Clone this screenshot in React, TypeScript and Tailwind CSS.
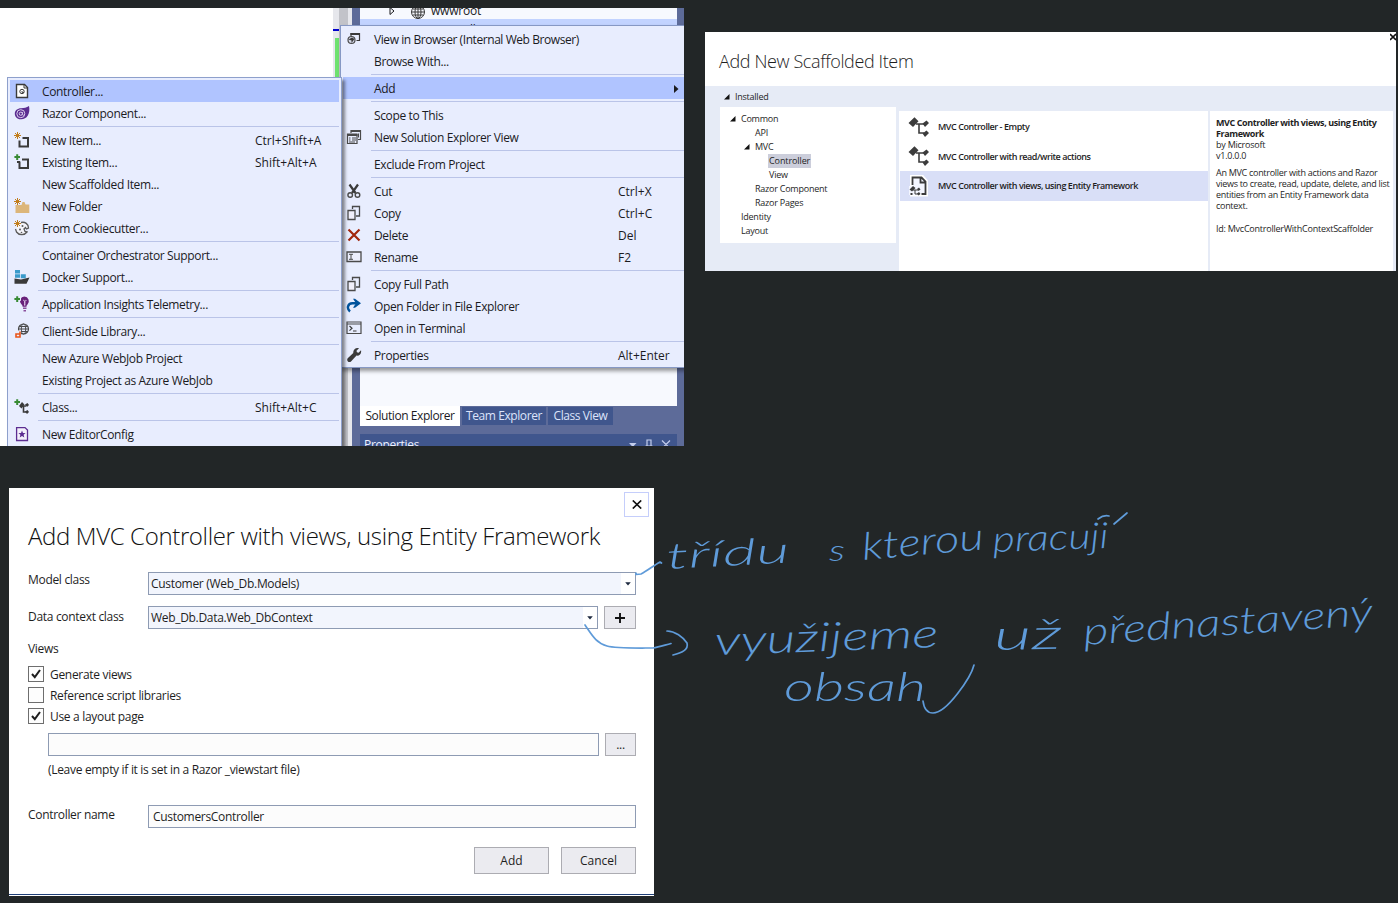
import type { ReactNode } from "react";

type Entry =
  | { kind: "sep" }
  | { kind: "item"; label: string; keys?: string; icon?: ReactNode; active?: boolean; arrow?: boolean };

const sep: Entry = { kind: "sep" };
const item = (label: string, icon?: ReactNode, keys?: string): Entry => ({ kind: "item", label, icon, keys });

function Icon({ children }: { children: ReactNode }) {
  return (
    <svg width="16" height="16" viewBox="0 0 16 16" fill="none" className="block">
      {children}
    </svg>
  );
}

const spark = (
  <path d="M3.5 0v7M0 3.5h7M1 1l5 5M6 1L1 6" stroke="#c27d1a" strokeWidth="1" />
);
const plus = <path d="M3.2 0.3v5.6M0.4 3.1h5.6" stroke="#388a34" strokeWidth="2" />;

const PageIcon = (
  <Icon>
    <path d="M2.5 1.5h8l3 3v10h-11z" fill="#fff" stroke="#3a3a3a" strokeWidth="1.4" />
    <path d="M10 1.5v3.5h3.5" stroke="#3a3a3a" />
    <circle cx="8" cy="8.5" r="2.2" stroke="#3a3a3a" strokeWidth="1" />
    <path d="M8 8v1.4h2" stroke="#3a3a3a" strokeWidth=".9" />
  </Icon>
);
const RazorIcon = (
  <Icon>
    <path d="M15 1c.8 4 .3 7-1.2 9.6C12.200 13.500 9.500 14.500 6.500 14.300 3 14 .8 11.600.8 8.700.8 5.500 3.500 3.200 7 3.200c3 0 5.500-.4 8-2.200z" fill="#5c2d91" />
    <circle cx="6.8" cy="8.7" r="4" stroke="#d9ccec" strokeWidth="1" />
    <circle cx="6.8" cy="8.7" r="1.600" stroke="#d9ccec" strokeWidth="1" />
    <path d="M8.500 7v2.500c0 1 1.500 1 2 0" stroke="#d9ccec" strokeWidth=".8" />
  </Icon>
);
const NewItemIcon = (
  <Icon>
    <path d="M5.500 8.500v6h8.500v-8.500h-5.500" stroke="#3a3a3a" strokeWidth="2" />
    {spark}
  </Icon>
);
const ExistingItemIcon = (
  <Icon>
    <path d="M5.500 7.500v6.500h8.500v-8.500h-6M3 8h3" stroke="#3a3a3a" strokeWidth="2" />
    {plus}
  </Icon>
);
const FolderIcon = (
  <Icon>
    <path d="M1.500 7h6l1-3h2l1 2.500h3.800v8.500H1.500z" fill="#dcb67a" />
    {spark}
  </Icon>
);
const CookieIcon = (
  <Icon>
    <path d="M7 2.500c4-1 7.500 1.500 7.500 5.500l-2 1-1-1.500-1.500 1.500 1 2.500 2 .5c-2.500 3.500-8 3.500-10.500 0L1.500 9" stroke="#5a5a5a" strokeWidth="1.300" fill="#f4f4fa" />
    <circle cx="6" cy="9.500" r="1" fill="#5a5a5a" />
    <circle cx="8.500" cy="6" r="1" fill="#5a5a5a" />
    <circle cx="7.500" cy="12.500" r=".8" fill="#5a5a5a" />
    {spark}
  </Icon>
);
const DockerIcon = (
  <Icon>
    <path d="M1 1h5v3.500H1zM1 5.300h5v3.500H1zM6.800 5.300h5v4H6.800z" fill="#3a9bcb" />
    <path d="M.5 9.500l6.500 1L15.500 8.500 12.500 14.800H.5z" fill="#3a3a3a" />
  </Icon>
);
const InsightsIcon = (
  <Icon>
    <path d="M10.300.5a4.700 4.700 0 0 1 3.200 8c-.8.8-1 1.200-1 2.300H8.600c0-1-.4-1.800-1.400-2.700A4.600 4.600 0 0 1 10.300.5z" fill="#68217a" />
    <path d="M9 4.500c1.500-1 2 1 1.700 5M12.500 4.500c-1.500-1-2 1-1.700 5" stroke="#e9d5f2" strokeWidth=".8" />
    <path d="M9 12.200h3.500M9.500 14.700h2.500" stroke="#8a4f9c" strokeWidth="1.500" />
    <path d="M3.200-.5v7.500M-.5 3.100h7.500" stroke="#e8edfe" strokeWidth="3.500" />
    {plus}
  </Icon>
);
const ClientIcon = (
  <Icon>
    <circle cx="9.500" cy="6" r="5" stroke="#4a4a4a" strokeWidth="1.200" />
    <ellipse cx="9.500" cy="6" rx="2.200" ry="5" stroke="#4a4a4a" />
    <path d="M4.500 6h10M5 3.500h9M5.500 8.500h8.500" stroke="#4a4a4a" />
    <path d="M1 7.500h6v8H1z" fill="#e8edfd" />
    <path d="M6 8.500v5.500h-4v-3h4" stroke="#e8541a" strokeWidth="1.600" />
  </Icon>
);
const ClassIcon = (
  <Icon>
    <path d="M5 7l3-4 2.500 2.500-3 4zM11 5.500l2.500-1.500 1.500 2-2 2zM11 12.500l2.500-1.500 1.500 2-2 2z" fill="#3a3a3a" />
    <path d="M8 7h4M9.500 7v6h2.500" stroke="#3a3a3a" strokeWidth="1.600" />
    {plus}
  </Icon>
);
const EditorConfigIcon = (
  <Icon>
    <path d="M2.600 1.600h8.400l2.500 2.500v10.400h-10.900z" fill="#f3f0fb" stroke="#5c2d91" strokeWidth="1.300" />
    <path d="M8 4.500l1 2.500 2.600.1-2 1.700.7 2.600L8 9.900l-2.300 1.500.7-2.600-2-1.700L7 7z" fill="#5c2d91" />
  </Icon>
);

const BrowserIcon = (
  <Icon>
    <path d="M5 5v-2.500h8.500v7h-3" stroke="#3a3a3a" strokeWidth="1.200" />
    <path d="M4.500 3h9" stroke="#3a3a3a" strokeWidth="2" />
    <circle cx="5.500" cy="9" r="3.500" stroke="#4a4a4a" strokeWidth="1.200" fill="#d4d8e8" />
    <path d="M2.500 8.500l3 1v2.500l3-4-2.500-1.500" fill="#3a3a3a" />
  </Icon>
);
const ViewsIcon = (
  <Icon>
    <path d="M5 4V1.500h9.500v9H12" stroke="#4a4a4a" strokeWidth="1.200" />
    <path d="M5 2h9.500M1 6h10.500" stroke="#4a4a4a" strokeWidth="2" />
    <path d="M1.500 5h9.500v9.500H1.500z" stroke="#4a4a4a" strokeWidth="1.200" />
    <path d="M3 9h1.500M6 9h4M3 11h1.500M6 11h4M3 13h6M12.500 4.500v4" stroke="#4a4a4a" />
  </Icon>
);
const CutIcon = (
  <Icon>
    <path d="M3.500 1.500L9.500 10M12 1.500L6 10" stroke="#3a3a3a" strokeWidth="2.200" />
    <circle cx="4.200" cy="12" r="2.300" stroke="#4a4a4a" strokeWidth="1.400" />
    <circle cx="11.500" cy="12" r="2.300" stroke="#4a4a4a" strokeWidth="1.400" />
  </Icon>
);
const CopyIcon = (
  <Icon>
    <path d="M6.500 4V1.500h7V11H10" stroke="#4a4a4a" strokeWidth="1.300" />
    <path d="M2 5.500h7v9H2z" fill="#f0effa" stroke="#4a4a4a" strokeWidth="1.300" />
  </Icon>
);
const DeleteIcon = (
  <Icon>
    <path d="M2.500 2.500l11 11M13.500 2.500l-11 11" stroke="#a1260d" strokeWidth="2.200" />
  </Icon>
);
const RenameIcon = (
  <Icon>
    <path d="M1 3h14v9.500H1z" stroke="#4a4a4a" strokeWidth="1.300" fill="#eceefc" />
    <path d="M3 5.300h4M3 10.300h4M5 5.300v5" stroke="#4a4a4a" />
  </Icon>
);
const OpenFolderIcon = (
  <Icon>
    <path d="M4 13.500C.5 10.500 1.500 5.500 6.500 5.300h6" stroke="#00539c" strokeWidth="2.400" />
    <path d="M9 .800l6 4.500-6 4.500h-2l3-4.500L7 .8z" fill="#00539c" />
  </Icon>
);
const TerminalIcon = (
  <Icon>
    <path d="M1 2h14v11.500H1z" stroke="#4a4a4a" strokeWidth="1.200" />
    <path d="M1 4h14" stroke="#4a4a4a" />
    <path d="M3.500 6l2.500 2.300-2.500 2.300M7 11h3.500" stroke="#3a3a3a" strokeWidth="1.200" />
  </Icon>
);
const WrenchIcon = (
  <Icon>
    <path d="M13 1.200L10.500 3.700l.4 1.600 1.700.4L15 3.200c.8 3-1.500 5.900-4.500 5.400L5 14.500c-2 1.800-5-.8-3.300-3.200L7.300 6C6.800 2.800 9.800.2 13 1.200z" fill="#3a3a3a" />
  </Icon>
);

const addMenu: Entry[] = [
  { kind: "item", label: "Controller...", icon: PageIcon, active: true },
  item("Razor Component...", RazorIcon),
  sep,
  item("New Item...", NewItemIcon, "Ctrl+Shift+A"),
  item("Existing Item...", ExistingItemIcon, "Shift+Alt+A"),
  item("New Scaffolded Item..."),
  item("New Folder", FolderIcon),
  item("From Cookiecutter...", CookieIcon),
  sep,
  item("Container Orchestrator Support..."),
  item("Docker Support...", DockerIcon),
  sep,
  item("Application Insights Telemetry...", InsightsIcon),
  sep,
  item("Client-Side Library...", ClientIcon),
  sep,
  item("New Azure WebJob Project"),
  item("Existing Project as Azure WebJob"),
  sep,
  item("Class...", ClassIcon, "Shift+Alt+C"),
  sep,
  item("New EditorConfig", EditorConfigIcon),
];

const projectMenu: Entry[] = [
  item("View in Browser (Internal Web Browser)", BrowserIcon),
  item("Browse With..."),
  sep,
  { kind: "item", label: "Add", active: true, arrow: true },
  sep,
  item("Scope to This"),
  item("New Solution Explorer View", ViewsIcon),
  sep,
  item("Exclude From Project"),
  sep,
  item("Cut", CutIcon, "Ctrl+X"),
  item("Copy", CopyIcon, "Ctrl+C"),
  item("Delete", DeleteIcon, "Del"),
  item("Rename", RenameIcon, "F2"),
  sep,
  item("Copy Full Path", CopyIcon),
  item("Open Folder in File Explorer", OpenFolderIcon),
  item("Open in Terminal", TerminalIcon),
  sep,
  item("Properties", WrenchIcon, "Alt+Enter"),
];

function Menu({ entries, keysWidth, iconPad }: { entries: Entry[]; keysWidth: string; iconPad: string }) {
  return (
    <ul className="flex flex-col px-[2px] pt-[2px] text-[12px] text-[#1b1b1f]">
      {entries.map((e, i) =>
        e.kind === "sep" ? (
          <li key={i} className="ml-7 flex h-[5px] items-start pt-[2px]">
            <div className="h-px w-full bg-[#bac4e8]" />
          </li>
        ) : (
          <li key={i} className={`flex h-[22px] items-center ${e.active ? "bg-[#b0c4ff]" : ""}`}>
            <span className={`w-[28px] ${iconPad}`}>{e.icon}</span>
            <span className={`flex-1 pt-[2px] whitespace-nowrap ${e.label.length > 35 ? "tracking-[-0.43px]" : "tracking-[-0.36px]"}`}>{e.label}</span>
            {e.keys && <span className={`${keysWidth} pt-[2px] tracking-[0px] whitespace-nowrap`}>{e.keys}</span>}
            {e.arrow && (
              <svg width="5" height="8" viewBox="0 0 5 8" className="mt-px mr-[8px]">
                <path d="M0 0l4.500 4L0 8z" fill="#1b1b1f" />
              </svg>
            )}
          </li>
        ),
      )}
    </ul>
  );
}

function IdePanel() {
  return (
    <section className="relative mt-2 flex h-[438px] w-[684px] overflow-hidden bg-white">
      <div className="w-[333px] bg-white" />
      <div className="flex w-[6px] flex-col bg-[#e6e7ec]">
        <div className="mt-[21px] h-[2px] bg-[#0000cd]" />
        <div className="mt-[7px] ml-[2px] h-[60px] bg-[#6fe26f]" />
      </div>
      <div className="w-[9px] bg-[#c2c3c9]" />
      <div className="w-[4px] bg-[#e6e7ec]" />
      <div className="flex flex-1 flex-col bg-[#5d6b99] pr-[7px] pl-2">
        <div className="flex h-[398px] shrink-0 flex-col bg-[#f7f9fe] text-[12px] tracking-[-0.1px] text-[#1b1b1f]">
          <div className="flex h-[11px] items-end pl-[29px]">
            <svg width="6" height="8" viewBox="0 0 6 8" fill="none" className="mb-[4px]">
              <path d="M1 .5l4 3.500-4 3.500z" stroke="#1b1b1f" />
            </svg>
            <svg width="16" height="16" viewBox="0 0 16 16" fill="none" stroke="#3a3a3a" className="mb-[-1px] ml-[15px]">
              <circle cx="8" cy="8" r="6.500" />
              <ellipse cx="8" cy="8" rx="3" ry="6.500" />
              <path d="M1.500 8h13M2.500 5h11M2.500 11h11M8 1.500v13" />
            </svg>
            <span className="ml-[5px] h-[11px] leading-[6px] tracking-[-0.2px]">wwwroot</span>
          </div>
          <div className="flex h-[22px] items-center bg-[#c2d3ff] pl-[51px]">
            <div className="mt-[2px] h-3 w-2 border border-[#dcb67a]" />
            <span className="ml-[13px]">Controllers</span>
          </div>
        </div>
        <div className="flex h-5 shrink-0 items-center gap-[2px] text-[12px] tracking-[-0.42px] text-[#dde4fb]">
          <span className="flex h-5 w-[100px] items-center justify-center bg-white whitespace-nowrap text-[#1b1b1f]">Solution Explorer</span>
          <span className="flex h-[18px] w-[84px] items-center justify-center bg-[#40568d] whitespace-nowrap">Team Explorer</span>
          <span className="flex h-[18px] w-[65px] items-center justify-center bg-[#40568d] whitespace-nowrap">Class View</span>
        </div>
        <div className="mt-2 flex h-[21px] shrink-0 items-center bg-[#40568d] pr-[5px] pl-1 text-[12px] text-[#eef2ff]">
          <span className="flex-1 tracking-[-0.3px]">Properties</span>
          <svg width="44" height="12" viewBox="0 0 44 12" fill="none" stroke="#c3cdec" strokeWidth="1.200">
            <path d="M1 4h7.500L4.800 8z" fill="#c3cdec" stroke="none" />
            <path d="M19 1h4v6h-4zM17.500 7h7M21 7v4M34 1.500l8 8M42 1.500l-8 8" />
          </svg>
        </div>
      </div>

      <div className="absolute top-[17px] left-[340px] h-[343px] w-[350px] border border-[#8698c4] bg-[#e8edfe] shadow-[2px_3px_4px_rgba(0,0,0,0.4)]">
        <Menu entries={projectMenu} keysWidth="w-[69px]" iconPad="ml-[3px]" />
      </div>
      <div className="absolute top-[69px] left-[7px] h-[380px] w-[335px] border border-[#8ea0cc] bg-[#e8edfe] shadow-[3px_3px_3px_rgba(0,0,0,0.45)]">
        <Menu entries={addMenu} keysWidth="w-[84px]" iconPad="ml-[4px]" />
      </div>
    </section>
  );
}

function Caret() {
  return (
    <svg width="6" height="6" viewBox="0 0 6 6" className="mr-[5px]">
      <path d="M5.500 0v5.500H0z" fill="#111" />
    </svg>
  );
}

const tree = [
  { label: "Common", pad: "pl-[10px]", open: true },
  { label: "API", pad: "pl-[35px]" },
  { label: "MVC", pad: "pl-[24px]", open: true },
  { label: "Controller", pad: "pl-[48px]", selected: true },
  { label: "View", pad: "pl-[49px]" },
  { label: "Razor Component", pad: "pl-[35px]" },
  { label: "Razor Pages", pad: "pl-[35px]" },
  { label: "Identity", pad: "pl-[21px]" },
  { label: "Layout", pad: "pl-[21px]" },
];

function ScaffoldIcon() {
  return (
    <svg width="22" height="20" viewBox="0 0 22 20" className="block">
      <path d="M.5 6L6.500.3l4 4L5 10zM14.500 6.500l4-3L21 6l-4 4zM14.500 16.500l4-3 2.500 2.500-4 4z" fill="#3c3c3c" />
      <path d="M8 7h9M11 7v9h5" fill="none" stroke="#3c3c3c" strokeWidth="1.600" />
    </svg>
  );
}

function ViewScaffoldIcon() {
  return (
    <svg width="22" height="22" viewBox="0 0 22 22" className="block">
      <path d="M3.500 1.500h11l4 4.500v14h-15z" fill="#f4f6ff" stroke="#fff" strokeWidth="3" />
      <path d="M4.500 10V2.500h9l4 4v12.500h-4M12.500 2.500v5h5" fill="none" stroke="#3c3c3c" strokeWidth="1.800" />
      <path d="M1 11h10v9H1z" fill="#f4f6ff" />
      <path d="M1.500 14.500l3.500-3.500 2.500 2-3.500 3.500zM9 14l2-1.500 1.500 2-2 1.500zM9 18.500l2-1.500 1.500 2-2 1.500zM2.500 18h2v2h-2z" fill="#3c3c3c" />
      <path d="M5 15h5M7 15v4h3" fill="none" stroke="#3c3c3c" />
    </svg>
  );
}

function ScaffoldPanel() {
  const options = [
    { label: "MVC Controller - Empty" },
    { label: "MVC Controller with read/write actions" },
    { label: "MVC Controller with views, using Entity Framework", selected: true },
  ];
  return (
    <section className="mt-8 ml-[21px] flex h-[239px] w-[691px] flex-col overflow-hidden bg-white text-[#1e1e1e]">
      <header className="flex h-[54px] items-start justify-between">
        <h1 className="mt-[17px] ml-[14px] text-[18px] leading-[25px] font-[350] tracking-[-0.38px] whitespace-nowrap">Add New Scaffolded Item</h1>
        <svg width="6" height="8" viewBox="0 0 6 8" className="mt-[1px]">
          <path d="M0 1l6 6M0 7l6-6" stroke="#111" strokeWidth="1.600" />
        </svg>
      </header>
      <div className="flex flex-1 bg-[#e6ebf6] text-[9px] tracking-[-0.24px]">
        <div className="w-[194px] pl-[15px]">
          <div className="flex h-[21px] items-center pl-1">
            <Caret />
            <span>Installed</span>
          </div>
          <div className="h-[136px] w-[176px] bg-white pt-[5px]">
            {tree.map((t) => (
              <div key={t.label} className={`flex h-[14px] items-center ${t.pad}`}>
                {t.open && <Caret />}
                <span className={t.selected ? "bg-[#cccedb] px-[1px] leading-[14px] tracking-[-0.1px]" : ""}>{t.label}</span>
              </div>
            ))}
          </div>
        </div>
        <div className="mt-[25px] w-[309px] bg-white pt-[1px] pl-[1px]">
          {options.map((o) => (
            <div key={o.label} className={`flex h-[29.500px] items-center pl-2 ${o.selected ? "bg-[#d9dff7]" : ""}`}>
              <span className="w-[30px]">{o.selected ? <ViewScaffoldIcon /> : <ScaffoldIcon />}</span>
              <span className="font-semibold tracking-[-0.44px] whitespace-nowrap">{o.label}</span>
            </div>
          ))}
        </div>
        <div className="mt-[25px] ml-[2px] w-[183px] bg-white pt-[6px] pl-[6px] leading-[11px] whitespace-nowrap">
          <p className="font-bold tracking-[-0.41px]">MVC Controller with views, using Entity<br />Framework</p>
          <p>by Microsoft<br />v1.0.0.0</p>
          <p className="mt-[6px] tracking-[-0.29px]">An MVC controller with actions and Razor<br />views to create, read, update, delete, and list<br />entities from an Entity Framework data<br />context.</p>
          <p className="mt-3">Id: MvcControllerWithContextScaffolder</p>
        </div>
      </div>
    </section>
  );
}

function Combo({ value, width }: { value: string; width: string }) {
  return (
    <div className={`flex h-[23px] items-center border border-[#8e9bb3] bg-[#f2f5fd] ${width}`}>
      <span className="flex-1 pl-[2px]">{value}</span>
      <span className="flex h-full w-[14px] items-center justify-center bg-white">
        <svg width="6" height="4" viewBox="0 0 6 4">
          <path d="M.2.300h5.600L3 3.500z" fill="#1e2a40" />
        </svg>
      </span>
    </div>
  );
}

function Check({ label, checked }: { label: string; checked?: boolean }) {
  return (
    <label className="flex h-[21px] items-center">
      <span className="flex size-4 items-center justify-center border border-[#6e6e6e] bg-[#fdfdfd]">
        {checked && (
          <svg width="10" height="10" viewBox="0 0 10 10" fill="none">
            <path d="M1 5l2.800 3.200L9 1" stroke="#1e1e1e" strokeWidth="2" />
          </svg>
        )}
      </span>
      <span className="ml-[6px] pt-[2px]">{label}</span>
    </label>
  );
}

function ControllerDialog() {
  const button = "flex items-center justify-center border border-[#acacb2] bg-[#ebebf0]";
  return (
    <section className="mt-[42px] ml-[9px] flex h-[408px] w-[645px] flex-col bg-white pr-[18px] pl-[19px] text-[12px] tracking-[-0.31px] text-[#1e1e1e]">
      <div className="-mr-[13px] mt-1 flex size-[25px] items-center justify-center self-end border border-[#c5cefb]">
        <svg width="10" height="9" viewBox="0 0 10 9">
          <path d="M.8.500l8.400 8M9.200.500l-8.400 8" stroke="#111" strokeWidth="1.700" />
        </svg>
      </div>
      <h2 className="mt-[3px] h-[33px] text-[24px] leading-[32px] font-light tracking-[-0.35px] whitespace-nowrap text-[#111]">
        Add MVC Controller with views, using Entity Framework
      </h2>
      <div className="mt-[19px] flex">
        <span className="w-[120px] leading-4">Model class</span>
        <Combo value="Customer (Web_Db.Models)" width="w-[488px]" />
      </div>
      <div className="mt-[11px] flex">
        <span className="w-[120px] leading-[22px]">Data context class</span>
        <Combo value="Web_Db.Data.Web_DbContext" width="w-[450px]" />
        <div className={`ml-[6px] h-[23px] w-8 ${button}`}>
          <svg width="10" height="10" viewBox="0 0 10 10">
            <path d="M5 0v10M0 5h10" stroke="#111" strokeWidth="1.900" />
          </svg>
        </div>
      </div>
      <span className="mt-3 leading-4">Views</span>
      <div className="mt-[6px]">
        <Check label="Generate views" checked />
        <Check label="Reference script libraries" />
        <Check label="Use a layout page" checked />
      </div>
      <div className="mt-[7px] ml-5 flex gap-[6px]">
        <div className="h-[23px] w-[551px] border border-[#8e9bb3] bg-[#fcfcfc]" />
        <div className={`h-[23px] w-[31px] ${button}`}>...</div>
      </div>
      <span className="mt-[6px] ml-5 leading-4">(Leave empty if it is set in a Razor _viewstart file)</span>
      <div className="mt-[27px] flex">
        <span className="w-[120px] leading-[19px]">Controller name</span>
        <div className="flex h-[23px] w-[488px] items-center border border-[#8e9bb3] bg-[#fcfcfc] pt-px pl-1">CustomersController</div>
      </div>
      <div className="mt-[19px] flex justify-end gap-3 tracking-[0px]">
        <div className={`h-[27px] w-[75px] pt-px ${button}`}>Add</div>
        <div className={`h-[27px] w-[75px] pt-px ${button}`}>Cancel</div>
      </div>
      <div className="-mr-[18px] mt-auto mb-[1px] -ml-[19px] h-px bg-[#1f3f77]" />
    </section>
  );
}

const notes = [
  { text: "třídu", x: 667, y: 569, w: 123, size: 36, turn: -3 },
  { text: "s", x: 829, y: 561, w: 16, size: 30, turn: 0 },
  { text: "kterou", x: 863, y: 560, w: 122, size: 38, turn: -5 },
  { text: "pracuji", x: 993, y: 552, w: 116, size: 36, turn: -2 },
  { text: "využijeme", x: 715, y: 655, w: 224, size: 40, turn: -2 },
  { text: "už", x: 994, y: 650, w: 68, size: 42, turn: -1 },
  { text: "přednastavený", x: 1084, y: 645, w: 290, size: 38, turn: -4 },
  { text: "obsah", x: 784, y: 701, w: 142, size: 40, turn: 0 },
];

function Annotations() {
  return (
    <svg width="1398" height="903" viewBox="0 0 1398 903" className="pointer-events-none absolute top-0 left-0">
      <g fill="none" stroke="#5f9bd9" strokeWidth="1.700" strokeLinecap="round" strokeLinejoin="round">
        <path d="M636 573v1.500l5-.5c6-3 12-8 19-12l1.500 1" />
        <path d="M585 625c7 10 11 18 22 21 8 2.500 29 2 46 2 6-1 12-3 18-4.500" />
        <path d="M667 631c8 0 16 6 20 12 2 7-6 10-14 12" />
        <path d="M1098 519c4-3 7-4 11-3M1114 524l13-11" />
        <path d="M923 701c1 8 4 12 10 12 14 0 38-36 41-48" />
      </g>
      <g fill="#5f9bd9" className="font-['Lato'] font-light italic">
        {notes.map((n) => (
          <text
            key={n.text}
            x={n.x}
            y={n.y}
            fontSize={n.size}
            textLength={n.w}
            lengthAdjust="spacingAndGlyphs"
            transform={`rotate(${n.turn} ${n.x} ${n.y})`}
          >
            {n.text}
          </text>
        ))}
      </g>
    </svg>
  );
}

export default function App() {
  return (
    <main className="relative h-[903px] w-[1398px] overflow-hidden bg-[#222627] font-['Open_Sans','Noto_Sans',sans-serif]">
      <div className="flex h-[446px] items-start">
        <IdePanel />
        <ScaffoldPanel />
      </div>
      <ControllerDialog />
      <Annotations />
    </main>
  );
}
